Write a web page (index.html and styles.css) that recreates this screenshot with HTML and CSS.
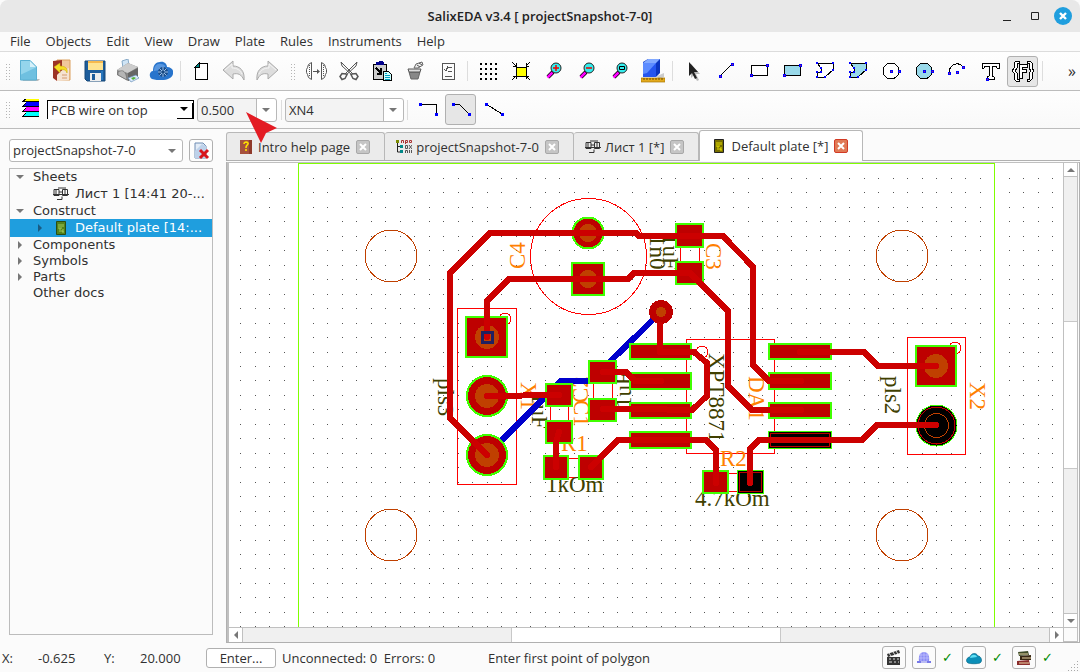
FILE: index.html
```html
<!DOCTYPE html>
<html lang="en">
<head>
  <meta charset="UTF-8">
  <title>SalixEDA v3.4</title>
  <link rel="stylesheet" href="styles.css">
</head>
<body>
  <header class="titlebar">
    <h1>SalixEDA v3.4 [ projectSnapshot-7-0]</h1>
    <div class="window-buttons">
      <button aria-label="Minimize"><svg width="10" height="12"><path d="M1 10.5h8" stroke="#222"/></svg></button>
      <button aria-label="Maximize"><svg width="10" height="12"><path d="M1.5 2.5h7v7h-7z" fill="none" stroke="#222"/></svg></button>
      <button aria-label="Close"><svg width="18" height="18"><circle cx="9" cy="9" r="9" fill="#1f9ede"/><path d="M6 6l6 6M12 6l-6 6" stroke="#fff" stroke-width="2.4"/></svg></button>
    </div>
  </header>

  <nav class="menu">
    <button>File</button><button>Objects</button><button>Edit</button><button>View</button><button>Draw</button><button>Plate</button><button>Rules</button><button>Instruments</button><button>Help</button>
  </nav>

  <div class="toolbar">
    <span class="handle"></span>
    <button class="tool" aria-label="New"><svg width="24" height="24" viewBox="0 0 24 24"><path d="M5 20h18l-2 2H6z" fill="#bbb"/><path d="M3 1h10l7 7v13H3z" fill="#6fc0e0"/><path d="M3 1h10l7 7L3 16z" fill="#94d5ec"/><path d="M13 1l7 7h-7z" fill="#d6f1fa"/><path d="M3.5 1.5h9.5l6.5 6.5v13h-16z" fill="none" stroke="#5ab0d3"/></svg></button>
    <button class="tool" aria-label="Open"><svg width="24" height="24" viewBox="0 0 24 24"><path d="M7 1h13v20H7z" fill="#f1c79b" stroke="#dba05e"/><path d="M3 2l9-1v17l-5 4-4-3z" fill="#9c3326"/><path d="M7 22l12-1V9l-8 3-4 4z" fill="#f5e3d2"/><path d="M12 16h5M12 19h5" stroke="#d59a71"/><path d="M4 8l6-4v3c6 0 8 3 7 7-1-3-3-4-7-3v3z" fill="#f5dd25" stroke="#c6a90c" stroke-width=".5"/></svg></button>
    <button class="tool" aria-label="Save"><svg width="24" height="24" viewBox="0 0 24 24"><path d="M2 2h20v20H4l-2-2z" fill="#1d5d9c" stroke="#174878"/><path d="M5 2h15v9H5z" fill="#ffe391"/><path d="M5 2h15v2H5z" fill="#f7b94d"/><path d="M7 14h11v8H7z" fill="#eee"/><path d="M9 15h3v6H9z" fill="#1d5d9c"/><path d="M20 12v9h-2v-9z" fill="#2876bd"/></svg></button>
    <button class="tool" aria-label="Print"><svg width="24" height="24" viewBox="0 0 24 24"><path d="M6 2l6-2 1 6-6 3z" fill="#cfe4f5" stroke="#86a9c6"/><path d="M1 11l11-7 10 4v9l-10 5-11-6z" fill="#888"/><path d="M1 11l11-7 10 4-10 6z" fill="#ccc"/><path d="M2 13c5-3 8-1 9 8l-9-5z" fill="#b5b5b5" stroke="#666" stroke-width=".6"/><path d="M12 14l10-5v8l-10 5z" fill="#666"/><path d="M12 19l8-3 3 3-8 4z" fill="#dceafc" stroke="#6d93ba" stroke-width=".7"/><path d="M15 19l3-1 2 1-3 2z" fill="#55b13b"/></svg></button>
    <button class="tool" aria-label="Cloud"><svg width="24" height="24" viewBox="0 0 24 24"><path d="M3 20c-4-3-2-8 1-8 0-6 3-9 7-9 4-1 7 2 7 5 5 0 7 4 6 7-1 4-6 6-11 6-4 0-7 0-10-1z" fill="#2874cc"/><path d="M5 12c0-5 3-8 7-7 4 0 5 3 4 5z" fill="#5796df"/><circle cx="14" cy="13" r="5" fill="#184d8d"/><path d="M14 8v10M9 13h10M10.5 9.5l7 7M17.5 9.5l-7 7" stroke="#9dc1e8"/><circle cx="14" cy="13" r="1.5" fill="#174881"/></svg></button>
    <span class="separator"></span>
    <button class="tool" aria-label="New sheet"><svg class="crisp" width="24" height="24" viewBox="0 0 24 24"><path d="M6 8l4-4h8v16H6z" fill="#fff" stroke="#000"/><path d="M10 4v4H6z" fill="#088" stroke="#000"/></svg></button>
    <button class="tool" aria-label="Undo"><svg width="24" height="24" viewBox="0 0 24 24"><path d="M1 11l10-9v5c7 0 12 5 11 14-3-6-6-7-11-6v5z" fill="#ddd" stroke="#aaa"/><path d="M3 11l7-6v4c5 0 8 2 10 6" fill="none" stroke="#f5f5f5"/></svg></button>
    <button class="tool" aria-label="Redo"><svg width="24" height="24" viewBox="0 0 24 24"><path d="M23 11L13 2v5C6 7 1 12 2 21c3-6 6-7 11-6v5z" fill="#ddd" stroke="#aaa"/><path d="M21 11l-7-6v4c-5 0-8 2-10 6" fill="none" stroke="#f5f5f5"/></svg></button>
    <span class="handle"></span>
    <button class="tool" aria-label="Flip"><svg width="24" height="24" viewBox="0 0 24 24" fill="none" stroke="#555"><path d="M7.5 3.5v17l-3-2-1-3-1-2v-3l1-2 1-3zM17.500 3.500v17l3-2 1-3 1-2v-3l-1-2-1-3z"/><path d="M5.500 6v12M19.500 6v12" stroke-dasharray="1 1"/><path d="M9 12.500h5"/><path d="M13 10l3 2.500-3 2.500z" fill="#555" stroke="none"/></svg></button>
    <button class="tool" aria-label="Cut"><svg width="24" height="24" viewBox="0 0 24 24" fill="none" stroke="#555"><path d="M4 3l1 4 10 9M20 3l-1 4L9 16M4 3l12 12M20 3L8 15"/><path d="M9 15l-4-.5-2 3 2 3 3-1 2-4zM15 15l4-.5 2 3-2 3-3-1-2-4z" stroke-width="1.5"/></svg></button>
    <button class="tool" aria-label="Paste"><svg class="crisp" width="24" height="24" viewBox="0 0 24 24"><path d="M3 5h13v15H3z" fill="#ccc" stroke="#000"/><path d="M6 3h2l1-1h3l1 1h1v3H6z" fill="#00008b"/><path d="M6 9l5 5M11 9v6H7" fill="none" stroke="#000" stroke-width="2"/><path d="M13 12h5l3 3v6h-8z" fill="#cff" stroke="#000"/><path d="M15 14h2M15 16h5M15 18h5M15 20h5" stroke="#00a0c0"/></svg></button>
    <button class="tool" aria-label="Delete"><svg width="24" height="24" viewBox="0 0 24 24"><path d="M6 13h11l-2 7H8z" fill="#888" stroke="#666"/><path d="M5 10h13l-1 3H6z" fill="#ddd" stroke="#555"/><path d="M11 9l2-4 6-2 1 3-5 3z" fill="#eee" stroke="#666"/><path d="M14 6l3 2M16 4l3 2" stroke="#555"/></svg></button>
    <button class="tool" aria-label="Properties"><svg class="crisp" width="24" height="24" viewBox="0 0 24 24" fill="none" stroke="#555"><path d="M6 4h12v16H6zM12 8h4M12 12h4M9 17h7"/><path d="M8 10l2 2 2-5"/></svg></button>
    <span class="separator"></span>
    <button class="tool" aria-label="Grid"><svg class="crisp" width="24" height="24" viewBox="0 0 24 24"><path d="M4 5h18M4 10h18M4 15h18M4 20h18" stroke="#000" stroke-width="2" stroke-dasharray="2 3"/></svg></button>
    <button class="tool" aria-label="Fit"><svg class="crisp" width="24" height="24" viewBox="0 0 24 24"><path d="M7 8h10v9H7z" fill="#ff0" stroke="#000"/><path d="M3 3l4 4M21 3l-4 4M3 21l4-4M21 21l-4-4M4 7h3V4M20 7h-3V4M4 17h3v3M20 17h-3v3" fill="none" stroke="#000"/></svg></button>
    <button class="tool" aria-label="Zoom in"><svg width="24" height="24" viewBox="0 0 24 24"><path d="M6 18l5-5" stroke="#000" stroke-width="4"/><path d="M5.5 18.5l5-5" stroke="#f0f" stroke-width="2.5"/><circle cx="14" cy="9" r="5" fill="#3ee" stroke="#222"/><path d="M11 9h6M14 6v6" stroke="#e00" stroke-width="1.5"/></svg></button>
    <button class="tool" aria-label="Zoom out"><svg width="24" height="24" viewBox="0 0 24 24"><path d="M6 18l5-5" stroke="#000" stroke-width="4"/><path d="M5.5 18.5l5-5" stroke="#f0f" stroke-width="2.5"/><circle cx="14" cy="9" r="5" fill="#3ee" stroke="#222"/><path d="M11 9h6" stroke="#e00" stroke-width="1.5"/></svg></button>
    <button class="tool" aria-label="Zoom window"><svg width="24" height="24" viewBox="0 0 24 24"><path d="M6 18l5-5" stroke="#000" stroke-width="4"/><path d="M5.5 18.5l5-5" stroke="#f0f" stroke-width="2.5"/><circle cx="14" cy="9" r="5" fill="#3ee" stroke="#222"/><path d="M11.5 7.5h5v3h-5z" fill="none" stroke="#000"/></svg></button>
    <button class="tool" aria-label="3D view"><svg width="24" height="24" viewBox="0 0 24 24"><path d="M16 17l7-3v4l-6 2z" fill="#ccc"/><path d="M2 3l5-3h12v14l-4 4H2z" fill="#0b35bf"/><path d="M2 4h13v14H2z" fill="#2455f0"/><path d="M2 4h13L6 14l-4 1z" fill="#5c8bff"/><path d="M2 4l5-4h12l-4 4z" fill="#82a9ff"/><path d="M0 19h24v4H0z" fill="#e3aa1c" stroke="#a87605" stroke-width=".7"/><path d="M3 19v2M6 19v2M9 19v2M12 19v2M15 19v2M18 19v2M21 19v2" stroke="#6f4c00"/></svg></button>
    <span class="separator"></span>
    <button class="tool" aria-label="Select"><svg width="24" height="24" viewBox="0 0 24 24"><path d="M10 5v14l3-3 3 6 2-1-3-6h4z" fill="#bbb"/><path d="M8 3v14l3-3 3 6 2-1-3-6h4z" fill="#222"/></svg></button>
    <button class="tool" aria-label="Line"><svg class="crisp" width="24" height="24" viewBox="0 0 24 24"><path d="M6 17L18 5" stroke="#000"/><path class="knot" d="M5 16h2v2H5zM17 4h2v2h-2z"/></svg></button>
    <button class="tool" aria-label="Rectangle"><svg class="crisp" width="24" height="24" viewBox="0 0 24 24"><path d="M4 6h16v10H4z" fill="#fff" stroke="#000"/><path class="knot" d="M3 15h2v2H3zM19 5h2v2h-2z"/></svg></button>
    <button class="tool" aria-label="Filled rectangle"><svg class="crisp" width="24" height="24" viewBox="0 0 24 24"><path d="M4 6h16v10H4z" fill="#99d9ea" stroke="#000"/><path class="knot" d="M3 15h2v2H3zM19 5h2v2h-2z"/></svg></button>
    <button class="tool" aria-label="Polyline"><svg class="crisp" width="24" height="24" viewBox="0 0 24 24"><path d="M4 4h16v7l-8 7H4v-5h4V9z" fill="#fff" stroke="#000"/><path class="knot-small" d="M3 4h2M19 4h2M19 11h2M11 18h2M3 18h2M3 13h2M7 13h2M7 9h2"/></svg></button>
    <button class="tool" aria-label="Polygon"><svg class="crisp" width="24" height="24" viewBox="0 0 24 24"><path d="M4 4h16v7l-8 7H4v-5h4V9z" fill="#99d9ea" stroke="#000"/><path class="knot-small" d="M3 4h2M19 4h2M19 11h2M11 18h2M3 18h2M3 13h2M7 13h2M7 9h2"/></svg></button>
    <button class="tool" aria-label="Circle"><svg class="crisp" width="24" height="24" viewBox="0 0 24 24"><circle cx="12" cy="12" r="8" fill="#fff" stroke="#000"/><path class="knot" d="M11 11h2v2h-2zM19 11h2v2h-2z"/></svg></button>
    <button class="tool" aria-label="Filled circle"><svg class="crisp" width="24" height="24" viewBox="0 0 24 24"><circle cx="12" cy="12" r="8" fill="#99d9ea" stroke="#000"/><path class="knot" d="M11 11h2v2h-2zM19 11h2v2h-2z"/></svg></button>
    <button class="tool" aria-label="Arc"><svg class="crisp" width="24" height="24" viewBox="0 0 24 24"><path d="M4 14c0-9 10-12 14-6" fill="none" stroke="#000"/><path class="knot" d="M3 13h2v2H3zM17 7h2v2h-2zM11 12h2v2h-2z"/></svg></button>
    <button class="tool" aria-label="Text"><svg class="crisp" width="24" height="24" viewBox="0 0 24 24"><path d="M4 4h17v5h-2l-1-2h-4v10l2 1v2H9v-2l2-1V7H7L6 9H4z" fill="#fff" stroke="#000"/><path class="knot" d="M8 19h2v2H8z"/></svg></button>
    <button class="tool checked" aria-label="Formula"><svg class="crisp" width="24" height="24" viewBox="0 0 24 24" fill="#fff" stroke="#000"><path d="M8 2H5L3 4v5l-2 3 2 2v6l2 2h3v-2H6v-6l-2-2 2-3V4h2zM16 2h3l2 2v5l2 3-2 2v6l-2 2h-3v-2h2v-6l2-2-2-3V4h-2z"/><path d="M8 5h8v3h-5v2h4v3h-4v6H8z"/></svg></button>
    <span class="separator"></span>
    <button class="more" aria-label="More">»</button>
  </div>

  <div class="toolbar options">
    <span class="handle"></span>
    <svg class="layers crisp" width="20" height="20" viewBox="0 0 20 20"><path d="M5 1h13v2H2z" fill="#ff0"/><path d="M5 4h13v4H3z" fill="#00f"/><path d="M5 9h13v4H3z" fill="#f0f"/><path d="M5 14h13v4H3z" fill="#0ff"/><path d="M1 3h17M1 8h17M1 13h17M1 18h17M2 3l3-2M2 8l3-3M2 13l3-3M2 18l3-3" stroke="#000"/></svg>
    <div class="combo classic"><select aria-label="Layer"><option>PCB wire on top</option></select></div>
    <div class="combo width-box"><input aria-label="Wire width" value="0.500"></div>
    <span class="separator"></span>
    <div class="combo net-box"><select aria-label="Net"><option>XN4</option></select></div>
    <span class="separator"></span>
    <button class="tool" aria-label="Right angle"><svg class="crisp" width="24" height="24" viewBox="0 0 24 24"><path d="M4 6h16v10" fill="none" stroke="#000"/><path class="knot blue" d="M3 5h2v2H3zM19 15h2v2h-2z"/></svg></button>
    <button class="tool checked" aria-label="Chamfered"><svg class="crisp" width="24" height="24" viewBox="0 0 24 24"><path d="M4 6h6l10 10" fill="none" stroke="#000"/><path class="knot blue" d="M3 5h2v2H3zM19 15h2v2h-2z"/></svg></button>
    <button class="tool" aria-label="Straight"><svg class="crisp" width="24" height="24" viewBox="0 0 24 24"><path d="M4 6l16 10" fill="none" stroke="#000"/><path class="knot blue" d="M3 5h2v2H3zM19 15h2v2h-2z"/></svg></button>
    <svg class="pointer" width="32" height="32" viewBox="0 0 32 32"><path d="M0 0l31 16-11 5-5 10z" fill="#e31b23"/></svg>
  </div>

  <main>
    <aside>
      <div class="project">
        <div class="combo project-box"><select aria-label="Project"><option>projectSnapshot-7-0</option></select></div>
        <button class="close-project" aria-label="Close project"><svg width="18" height="18" viewBox="0 0 18 18"><path d="M3 1h8l3 3v12H3z" fill="#e3ecf7" stroke="#6e8cb3"/><path d="M3 9l7-7 4 2v12H3z" fill="#bdd1ea"/><path d="M8 8l8 8M16 8l-8 8" stroke="#d8141c" stroke-width="3"/></svg></button>
      </div>
      <ul class="tree">
        <li class="open">Sheets</li>
        <li class="doc"><svg width="16" height="14" viewBox="0 0 16 14" fill="none" stroke="#333"><path d="M1 2.5h5v6H1zM9.5 2.5h5v6h-5zM4 12.5h5v-3M6 5h3M0 7.5h16M5 1h8M3 3v5M12 3v5"/></svg>Лист 1 [14:41 20-...</li>
        <li class="open">Construct</li>
        <li class="doc closed selected"><svg width="16" height="14" viewBox="0 0 16 14"><path d="M3.5.5h9v13h-9z" fill="#53821c" stroke="#2b4d11"/><path d="M6 3v5h2V3M10 3v3M6 10h4v2M10 8v3" fill="none" stroke="#a2c95b"/></svg>Default plate [14:...</li>
        <li class="closed">Components</li>
        <li class="closed">Symbols</li>
        <li class="closed">Parts</li>
        <li>Other docs</li>
      </ul>
    </aside>

    <section class="editor">
      <div class="tabs">
        <div class="tab"><svg width="16" height="16" viewBox="0 0 16 16"><path d="M3 1h11v14H3z" fill="#8f3a2b"/><path d="M2 1h9v14H2z" fill="#a6513d"/><path d="M6 5c0-3 5-2 4 0-1 2-2 1-2 4M8 10v2" fill="none" stroke="#ffe000" stroke-width="1.6"/></svg><span>Intro help page</span><button aria-label="Close tab"><svg width="8" height="8"><path d="M1 1l6 6M7 1L1 7" stroke="#fff" stroke-width="2"/></svg></button></div>
        <div class="tab"><svg width="16" height="16" viewBox="0 0 16 16" fill="none"><path d="M1.5 2v11H6M2 7.5h4" stroke="#222"/><path d="M0 2.5h3" stroke="#7b8a00" stroke-width="3"/><path d="M4 7.5h3M4 12.5h3" stroke="#088" stroke-width="3"/><path d="M5.5 4V1.5h2V4M9.5 5V1.5h2v2h-2M13.5 1.5h2v2h-2z" stroke="#a33"/><path d="M9.5 6.5h2v3h-2zM13 6l3 4M16 6l-3 4M9.5 14v-2.500h2V14M13.500 11v3M15.500 11v3" stroke="#555"/></svg><span>projectSnapshot-7-0</span><button aria-label="Close tab"><svg width="8" height="8"><path d="M1 1l6 6M7 1L1 7" stroke="#fff" stroke-width="2"/></svg></button></div>
        <div class="tab"><svg width="16" height="14" viewBox="0 0 16 14" fill="none" stroke="#333"><path d="M1 2.5h5v6H1zM9.5 2.5h5v6h-5zM4 12.5h5v-3M6 5h3M0 7.5h16M5 1h8M3 3v5M12 3v5"/></svg><span>Лист 1 [*]</span><button aria-label="Close tab"><svg width="8" height="8"><path d="M1 1l6 6M7 1L1 7" stroke="#fff" stroke-width="2"/></svg></button></div>
        <div class="tab active"><svg width="16" height="14" viewBox="0 0 16 14"><path d="M3.5.5h9v13h-9z" fill="#776f00" stroke="#222"/><path d="M6 3v5h2V3M10 3v3M6 10h4v2M10 8v3" fill="none" stroke="#e8e000"/></svg><span>Default plate [*]</span><button aria-label="Close tab"><svg width="8" height="8"><path d="M1 1l6 6M7 1L1 7" stroke="#fff" stroke-width="2"/></svg></button></div>
      </div>
      <div class="frame">
        <svg class="board" id="board">
          <g transform="translate(-229 -163)">
            <path id="grid" fill="#555"/>
            <path class="edge" d="M298.5 2000V163.5H994.5V2000"/>
            <g class="drill">
              <circle cx="391" cy="256" r="26"/><circle cx="902" cy="256" r="26"/>
              <circle cx="391" cy="535" r="26"/><circle cx="902" cy="535" r="26"/>
            </g>
            <g class="outline">
              <circle cx="588.5" cy="256.5" r="58"/>
              <rect x="457.5" y="308.5" width="59" height="176"/><circle cx="505" cy="319" r="6"/>
              <rect x="686.5" y="339.5" width="88" height="114"/><circle cx="702" cy="352" r="6"/>
              <rect x="907.5" y="337.5" width="58" height="117"/><circle cx="955" cy="348" r="6"/>
              <path d="M680.5 240v30M699.5 240v30M550.5 400v30M568.5 400v30M593.5 375v30M612.5 375v30"/>
              <path d="M560 458.5h30M560 477.5h30M720 473.5h30M720 491.5h30"/>
            </g>
            <g class="value">
              <text transform="translate(438 378) rotate(90)">pls3</text>
              <text transform="translate(650 235) rotate(90)">1n0</text>
              <text transform="translate(663 234) rotate(90)">1uF</text>
              <text transform="translate(532 393) rotate(90)">1uF</text>
              <text transform="translate(631 408) rotate(-90)">1uF</text>
              <text transform="translate(709 353) rotate(90)">XPT8871</text>
              <text transform="translate(885 376) rotate(90)">pls2</text>
              <text x="546" y="492">1kOm</text>
              <text x="695" y="506">4.7kOm</text>
            </g>
            <g class="name">
              <text transform="translate(525 269) rotate(-90)">C4</text>
              <text transform="translate(706 243) rotate(90)">C3</text>
              <text transform="translate(521 382) rotate(90)">X1</text>
              <text transform="translate(588 403) rotate(-90)">C2</text>
              <text transform="translate(574 400) rotate(90)">C1</text>
              <text transform="translate(749 376) rotate(90)">DA1</text>
              <text transform="translate(970 382) rotate(90)">X2</text>
              <text x="561" y="451">R1</text>
              <text x="720" y="466">R2</text>
            </g>
            <path class="wire bottom" d="M487 455L561 381H590L661 312"/>
            <g class="pad">
              <circle cx="588" cy="233" r="15.5"/>
              <rect x="572" y="263" width="32" height="32"/>
              <rect x="466" y="317" width="41" height="40"/>
              <circle cx="487" cy="396" r="20"/><circle cx="487" cy="455" r="20"/>
              <rect x="676" y="224" width="27" height="23"/><rect x="676" y="262" width="27" height="22"/>
              <rect x="589" y="361" width="27" height="22"/><rect x="589" y="399" width="27" height="22"/>
              <rect x="546" y="384" width="26" height="22"/><rect x="546" y="421" width="26" height="22"/>
              <rect x="544" y="456" width="24" height="23"/><rect x="579" y="456" width="24" height="23"/>
              <rect x="630" y="344" width="61" height="15"/><rect x="630" y="373" width="61" height="16"/>
              <rect x="630" y="403" width="61" height="15"/><rect x="630" y="432" width="61" height="16"/>
              <rect x="769" y="344" width="62" height="15"/><rect x="769" y="373" width="62" height="16"/>
              <rect x="769" y="403" width="62" height="15"/>
              <rect x="916" y="346" width="40" height="40"/>
              <rect x="703" y="471" width="25" height="22"/>
            </g>
            <g class="ground">
              <rect x="768.5" y="431.5" width="63" height="17"/><rect x="737.5" y="470.5" width="26" height="23"/>
              <circle cx="936.5" cy="425.5" r="20.5"/>
            </g>
            <g class="ground-inner">
              <rect x="770.5" y="433.5" width="59" height="13"/><rect x="739.5" y="472.5" width="22" height="19"/>
              <circle cx="936.5" cy="425.5" r="18.5"/>
            </g>
            <circle class="via" cx="661" cy="312" r="12"/>
            <g class="hole">
              <circle cx="588" cy="233" r="9"/><circle cx="588" cy="279" r="9"/>
              <circle cx="487" cy="337" r="12"/><circle cx="487" cy="396" r="12"/><circle cx="487" cy="455" r="12"/>
              <circle cx="661" cy="312" r="5"/><circle cx="936" cy="366" r="12"/>
            </g>
            <circle class="hole-line" cx="936.5" cy="425.5" r="12"/>
            <g class="wire">
              <path d="M487 455L450 418V273L490 233H636L639 236H723L753 267V365L769 381H801"/>
              <path d="M487 337V301L509 279H628L634 273H690L728 311V386L752 410H801"/>
              <path d="M660 325V352H694L707 363V396L692 410L641 409H603"/>
              <path d="M603 372H626L635 381H661"/>
              <path d="M487 396L559 395M559 432L556 442V467"/>
              <path d="M591 467L618 440H706L716 450V483"/>
              <path d="M750 483V449L759 440H862L877 425H936"/>
              <path d="M800 352H864L878 366H936"/>
            </g>
            <path class="marker" d="M482 332h10v10h-10z"/>
          </g>
        </svg>
        <div class="scroll vertical"><button class="up" aria-label="Up"></button><span class="track"></span><span class="thumb"></span><span class="track"></span><button class="down" aria-label="Down"></button></div>
        <div class="scroll horizontal"><button class="left" aria-label="Left"></button><span class="track"></span><span class="thumb"></span><span class="track"></span><button class="right" aria-label="Right"></button></div>
        <div class="corner"></div>
      </div>
    </section>
  </main>

  <footer>
    <span class="axis">X:</span><span class="coord">-0.625</span>
    <span class="axis">Y:</span><span class="coord">20.000</span>
    <button class="enter">Enter...</button>
    <span class="counts">Unconnected: 0&nbsp; Errors: 0</span>
    <span class="hint">Enter first point of polygon</span>
    <div class="indicators">
      <button aria-label="Video"><svg width="16" height="16" viewBox="0 0 16 16"><path d="M1 7h13v8H1z" fill="#333"/><path d="M1 4l12-4 1 3L2 7z" fill="#333"/><path d="M3 3l2 3M7 2l2 3M10 1l2 3M3 9h2M7 9h2M11 9h2M3 12h3M8 12h2M12 12h1" stroke="#ddd"/></svg></button>
      <button aria-label="Server"><svg width="16" height="16" viewBox="0 0 16 16"><path d="M3 11C2 5 5 2 8 2s6 3 5 9z" fill="#8a8cf4"/><path d="M8 2v9M5 3v8M11 3v8M3 5h10M3 8h10" stroke="#c5c6ff" stroke-width=".7"/><path d="M1 12h14" stroke="#7779e8" stroke-width="2"/><path d="M5 12h6" stroke="#fff"/></svg></button><span class="check">✓</span>
      <button aria-label="Cloud state"><svg width="16" height="16" viewBox="0 0 16 16"><path d="M2 13c-3-2-1-6 2-6 1-4 6-5 8-1 3 0 5 5 2 7-3 1-9 1-12 0z" fill="#0c8fb8" stroke="#086a8a" stroke-width=".7"/><path d="M4 8c1-4 6-4 7-1z" fill="#5fe0f5"/></svg></button><span class="check">✓</span>
      <button aria-label="Library"><svg width="16" height="16" viewBox="0 0 16 16"><path d="M2 2l10-1 1 4-10 1z" fill="#3e4b28"/><path d="M4 6l11-1v5H4z" fill="#382713"/><path d="M1 11l12-1 1 5H1z" fill="#8b2c2c"/><path d="M3 4h9M6 8h9M3 13h10" stroke="#ead7a7"/></svg></button><span class="check">✓</span>
    </div>
    <svg class="grip crisp" width="12" height="12"><path d="M10 1h1M7 4h4M4 7h7M1 10h10" stroke="#aaa" stroke-dasharray="1 2"/></svg>
  </footer>
  <script>
    // grid dots, snapped to whole pixels
    const board = document.getElementById('board');
    function drawGrid() {
      let d = '';
      for (let x = 0; x * 14.5 < board.clientWidth - 11; x++) {
        for (let y = 0; y * 14.46 < board.clientHeight - 15; y++) {
          d += `M${Math.round(240 + x * 14.5)} ${Math.round(178 + y * 14.46)}h1v1h-1z`;
        }
      }
      document.getElementById('grid').setAttribute('d', d);
    }
    window.onresize = drawGrid;
    drawGrid();
  </script>
</body>
</html>
```

FILE: styles.css
```css
* { box-sizing: border-box; }
body { margin: 0; height: 100vh; display: flex; flex-direction: column; background: #fbfbfb; color: #303030; font: 13px/18px "Open Sans", "Noto Sans", sans-serif; overflow: hidden; }
button, input, select { font: inherit; color: inherit; margin: 0; padding: 0; border: none; background: none; }
svg { display: block; flex: none; }
.crisp { shape-rendering: crispEdges; }

.titlebar { display: grid; grid-template-columns: 1fr auto 1fr; align-items: center; height: 32px; background: #e8e8e8; border-radius: 8px 8px 0 0; flex: none; }
.titlebar h1 { grid-column: 2; margin: 0; font-size: 13px; font-weight: 600; color: #222; }
.window-buttons { display: flex; justify-content: flex-end; align-items: center; gap: 18px; padding-right: 8px; }
.window-buttons button:last-child { margin-left: -4px; }

.menu { display: flex; align-items: flex-start; gap: 15px; height: 20px; padding-left: 10px; border-bottom: 1px solid #dcdcdc; flex: none; }

.toolbar { position: relative; display: flex; align-items: center; height: 39px; border-bottom: 1px solid #bcbcbc; background: linear-gradient(#fefefe, #f9f9f9); flex: none; }
.options { height: 38px; }
.handle { width: 5px; height: 17px; margin: 0 2px 0 5px; background: radial-gradient(circle, #b5b5b5 1px, transparent 1px) 0 0 / 3px 3px; }
.tool + .handle { margin: 0 4px 0 7px; }
.separator { width: 1px; height: 20px; margin: 0 3px; background: #ddd; }
.tool { display: flex; justify-content: center; align-items: center; width: 31px; height: 31px; margin: 0 1px; border: 1px solid transparent; border-radius: 3px; flex: none; }
.tool.checked { background: #e6e6e6; border-color: #b0b0b0; }
.knot { fill: #c02060; stroke: #00f; stroke-width: 1; }
.knot.blue { fill: #00f; }
.knot-small { fill: none; stroke: #00f; stroke-width: 2; }
.more { margin-left: auto; padding-right: 4px; font-size: 16px; }
.layers { margin: 0 6px 4px 9px; }
.pointer { position: absolute; left: 246px; top: 21px; z-index: 2; }

.combo { position: relative; display: flex; height: 24px; border: 1px solid #b8b8b8; border-radius: 3px; background: #f4f4f4; }
.combo select, .combo input { appearance: none; width: 100%; padding: 0 3px; outline: none; }
.combo::after { content: ""; position: absolute; right: 6px; top: 9px; border: 4px solid transparent; border-top-color: #777; border-bottom: none; pointer-events: none; }
.classic { width: 147px; height: 19px; border: none; border-top: 1px solid #000; border-left: 1px solid #000; border-right: 1px solid #000; border-radius: 0; background: #fff; }
.classic::after { top: 6px; right: 5px; border-top-color: #000; }
.classic::before { content: ""; position: absolute; right: 0; bottom: 0; width: 15px; height: 15px; border-right: 1px solid #000; border-bottom: 1px solid #000; pointer-events: none; }
.width-box { width: 80px; margin: 0 1px 0 3px; }
.net-box { width: 119px; }
.width-box, .net-box { background: linear-gradient(90deg, #f3f3f3 calc(100% - 20px), #b8b8b8 calc(100% - 20px), #b8b8b8 calc(100% - 19px), #fff calc(100% - 19px)); }

main { flex: 1; display: flex; min-height: 0; }
aside { width: 226px; padding: 10px 13px 8px 9px; display: flex; flex-direction: column; gap: 6px; flex: none; }
.project { display: flex; gap: 6px; }
.project-box { flex: 1; height: 23px; background: #fff; }
.project-box select { height: 20px; }
.close-project { width: 24px; height: 23px; border: 1px solid #b0b0b0; border-radius: 3px; background: #fdfdfd; display: flex; justify-content: center; align-items: center; }
.tree { flex: 1; margin: 0; padding: 0; border: 1px solid #bcbcbc; list-style: none; font: 13px/16px "DejaVu Sans", sans-serif; white-space: nowrap; overflow: hidden; }
.tree li { position: relative; padding-left: 23px; height: 16px; }
.tree .doc { display: flex; align-items: center; gap: 6px; height: 18px; padding-left: 43px; }
.tree .selected { background: #1f9ede; color: #fff; }
.open::before, .closed::before { content: ""; position: absolute; left: 6px; top: 6px; border: 4px solid transparent; border-top-color: #777; border-bottom: none; }
.closed::before { left: 8px; top: 4px; border: 4px solid transparent; border-left-color: #777; border-right: none; }
.doc.closed::before { left: 28px; top: 5px; border-left-color: #195b83; }

.editor { flex: 1; display: flex; flex-direction: column; min-width: 0; padding-top: 1px; }
.tabs { display: flex; align-items: flex-end; height: 31px; border-bottom: 1px solid #b0b0b0; }
.tab { display: flex; align-items: center; gap: 4px; height: 28px; padding: 0 14px 0 11px; border: 1px solid #b8b8b8; border-bottom: none; border-left-width: 0; background: #ebebeb; border-radius: 3px 3px 0 0; white-space: nowrap; }
.tab:first-child { border-left-width: 1px; }
.tab.active { height: 31px; margin-bottom: -1px; background: #fff; border-left-width: 1px; }
.tab button { width: 14px; height: 14px; margin-left: 2px; border: 1px solid #a8a8a8; border-radius: 2px; background: #c5c5c5; display: flex; justify-content: center; align-items: center; }
.tab.active button { background: #e07a56; border-color: #d33a24; }
.frame { flex: 1; display: grid; grid-template: 1fr 15px / 1fr 15px; min-height: 0; margin-top: 1px; padding: 1px 1px 0 2px; border: 1px solid #b0b0b0; border-width: 0 1px 1px; box-shadow: inset 2px 1px #c0c0c0; }
.board { width: 100%; height: 100%; min-height: 0; background: #fff; shape-rendering: crispEdges; font: 23px "Liberation Serif", serif; }
.edge { fill: none; stroke: #80ff00; }
.drill, .hole-line { fill: none; stroke: #c04000; }
.outline { fill: none; stroke: #f00; }
.value { fill: #404000; }
.name { fill: #ff8000; }
.pad { fill: #be0000; stroke: #40ff00; stroke-width: 2; }
.ground { fill: #000; stroke: #40ff00; }
.ground-inner { fill: none; stroke: #be0000; }
.via { fill: #be0000; }
.hole { fill: #c04000; }
.marker { fill: none; stroke: #202060; stroke-width: 3; }
.wire { fill: none; stroke: #cc0000; stroke-width: 6; stroke-linecap: round; stroke-linejoin: round; }
.wire.bottom { stroke: #0000cc; }

.scroll { display: flex; background: #f0f0f0; }
.vertical { flex-direction: column; border-left: 1px solid #c0c0c0; border-right: 1px solid #c0c0c0; }
.horizontal { border-top: 1px solid #c0c0c0; }
.corner { border: 1px solid #c0c0c0; background: #fbfbfb; }
.scroll .track { flex: 144; }
.scroll .thumb { flex: 146; background: #fff; }
.horizontal .track, .horizontal .thumb { flex: 1; }
.vertical .thumb { border: 1px solid #c8c8c8; border-width: 1px 0; }
.horizontal .thumb { border: 1px solid #c8c8c8; border-width: 0 1px; }
.scroll button { flex: none; width: 14px; height: 14px; background: #fff; display: flex; justify-content: center; align-items: center; }
.vertical button { width: 13px; }
.scroll button::before { content: ""; border: 4px solid transparent; }
.scroll .up { border-bottom: 1px solid #c0c0c0; }
.scroll .down { border-top: 1px solid #c0c0c0; }
.scroll .left { border-right: 1px solid #c0c0c0; }
.scroll .right { border-left: 1px solid #c0c0c0; }
.scroll .up::before { border-top: none; border-bottom-color: #777; }
.scroll .down::before { border-bottom: none; border-top-color: #777; }
.scroll .left::before { border-left: none; border-right-color: #777; }
.scroll .right::before { border-right: none; border-left-color: #777; }

footer { display: flex; align-items: center; height: 29px; flex: none; padding: 0 1px 0 2px; }
.axis { width: 36px; }
.coord { width: 66px; }
.enter { width: 70px; height: 20px; border: 1px solid #b0b0b0; border-radius: 3px; background: #fff; line-height: 16px; }
.counts { width: 212px; padding-left: 6px; }
.indicators { display: flex; align-items: center; margin-left: auto; }
.indicators button { width: 24px; height: 23px; margin-right: 6px; border: 1px solid #b0b0b0; border-radius: 3px; display: flex; justify-content: center; align-items: center; }
.check { width: 20px; color: #008a00; font-family: "DejaVu Sans", sans-serif; }
.grip { align-self: flex-end; margin-left: 5px; }
```
